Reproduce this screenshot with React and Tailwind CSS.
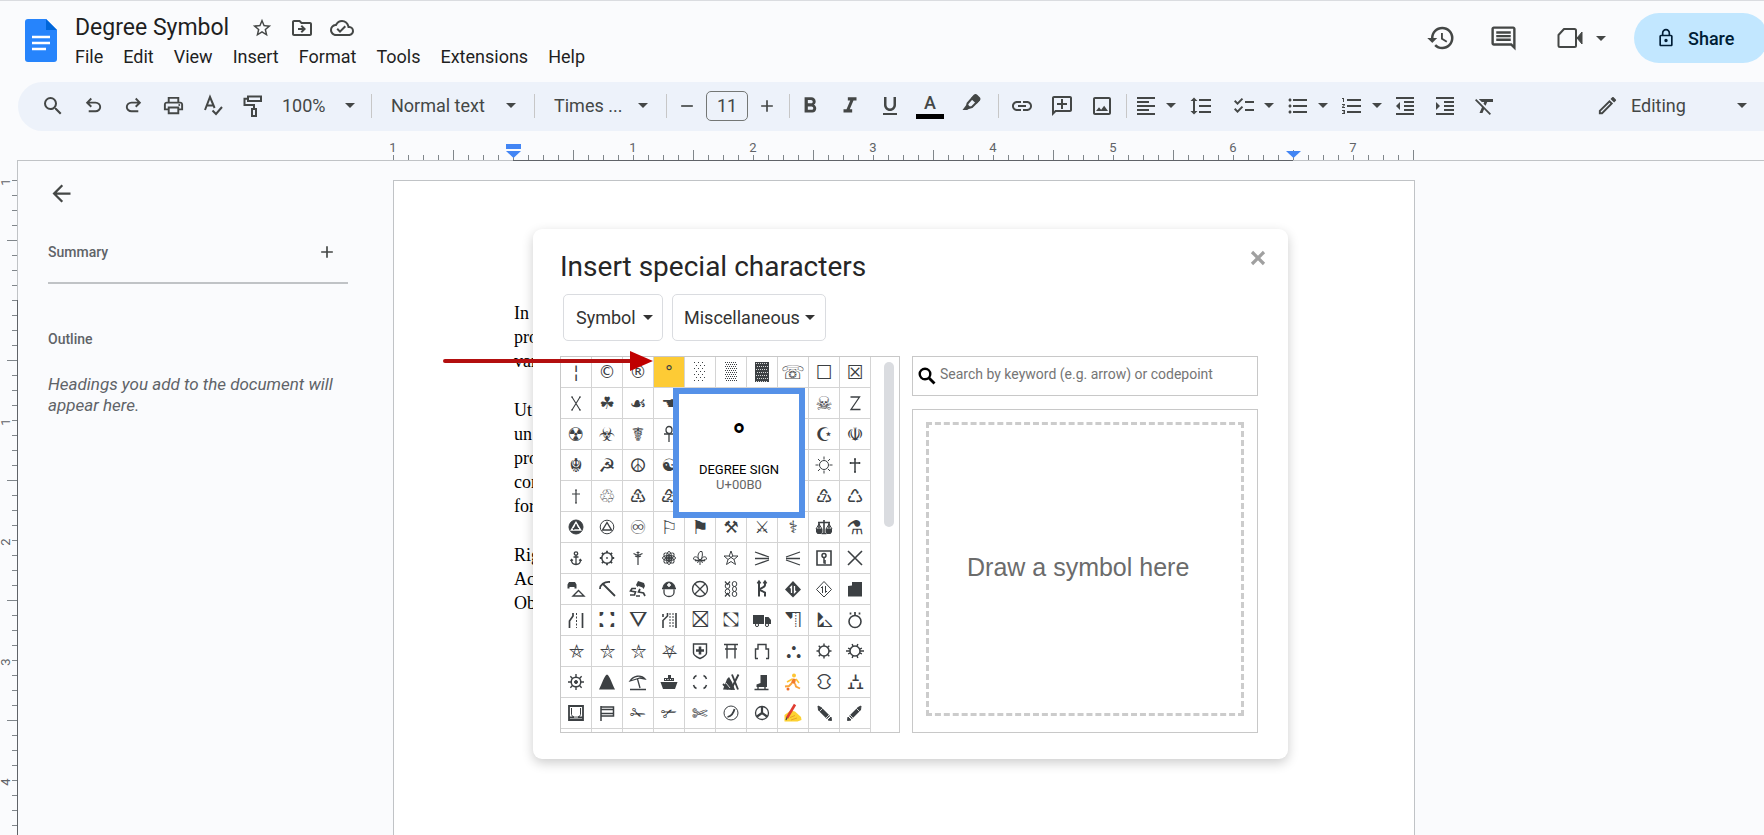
// src/App.jsx
import React, { useState } from 'react';
import {
  MdSearch,
  MdOutlinePrint,
  MdStarBorder,
  MdOutlineDriveFileMove,
  MdOutlineCloudDone,
  MdHistory,
  MdOutlineComment,
  MdOutlineLock,
  MdFormatAlignLeft,
  MdFormatLineSpacing,
  MdChecklist,
  MdFormatListBulleted,
  MdFormatListNumbered,
  MdFormatIndentDecrease,
  MdFormatIndentIncrease,
  MdFormatClear,
  MdInsertLink,
  MdOutlineAddComment,
  MdOutlineImage,
  MdOutlineEdit,
  MdFormatBold,
  MdFormatItalic,
  MdFormatUnderlined,
  MdRemove,
  MdAdd,
  MdArrowBack,
} from 'react-icons/md';

const MENUS = ['File', 'Edit', 'View', 'Insert', 'Format', 'Tools', 'Extensions', 'Help'];

const PARAGRAPHS = [
  ['In', 'pro', 'var'],
  ['Ut', 'un', 'pro', 'con', 'for'],
  ['Rig', 'Ac', 'Ob'],
];

const CHARACTERS = [
  '¦', '©', '®', '°', '░', '▒', '▓', '☏', '☐', '☒',
  '☓', '☘', '☙', '☚', '☛', '☜', '☞', '☟', '☠', '☡',
  '☢', '☣', '☤', '☥', '☦', '☧', '☨', '☩', '☪', '☫',
  '☬', '☭', '☮', '☯', '☸', '☹', '☺', '☻', '☼', '♰',
  '♱', '♲', '♳', '♴', '♵', '♶', '♷', '♸', '♹', '♺',
  '♼', '♽', '♾', '⚐', '⚑', '⚒', '⚔', '⚕', '⚖', '⚗',
  '⚓', '⚙', '⚚', '⚛', '⚜', '⚝', '⚞', '⚟', '⚿', '⛌',
  '⛍', '⛏', '⛐', '⛑', '⛒', '⛓', '⛕', '⛖', '⛗', '⛘',
  '⛙', '⛚', '⛛', '⛜', '⛝', '⛞', '⛟', '⛠', '⛡', '⛣',
  '⛤', '⛥', '⛦', '⛧', '⛨', '⛩', '⛫', '⛬', '⛭', '⛮',
  '⛯', '⛰', '⛱', '⛴', '⛶', '⛷', '⛸', '⛹', '⛻', '⛼',
  '⛾', '⛿', '✁', '✃', '✄', '✆', '✇', '✍', '✎', '✐',
];

// Glyphs that the text font draws too small
const LARGE = '☏☐☒☙☢☣☤☠☫☪☬☭☮♲♳♴♵♶♷♸♹♺♾⚑⚐⚗✁✃✄⛤⛥⛦⛧';
const EXTRA_LARGE = '⛚⛛⛝⛞⛠⛡⛬⛻⛼';

const rays = (cx, cy, from, to, count, start = 0) =>
  Array.from({ length: count }, (_, i) => {
    const a = start + (i * 2 * Math.PI) / count;
    return `M${cx + from * Math.cos(a)} ${cy + from * Math.sin(a)}L${cx + to * Math.cos(a)} ${cy + to * Math.sin(a)}`;
  }).join('');

const dotRows = (from, to, step, shift) =>
  Array.from(
    { length: Math.floor((to - from) / step) + 1 },
    (_, i) => `M${4 + (i % 2) * shift} ${from + i * step}H16`
  ).join('');

// Pictographs drawn by hand, on a 20x20 box
const DRAWN = {
  '░': <path d={dotRows(0.5, 20, 3, 2)} strokeWidth="1" strokeDasharray="1 3" />,
  '▒': <path d={dotRows(0.5, 20, 2, 1)} strokeWidth="1" strokeDasharray="1 1" />,
  '▓': (
    <>
      <path d="M3 0h14v20H3z" fill="currentColor" stroke="none" />
      <path d={dotRows(1.5, 20, 3, 1)} stroke="#fff" strokeWidth="0.800" strokeDasharray="1 1" />
    </>
  ),
  '☓': <path d="M6 4l8 13M14 4 6 17M5 4h2M13 4h2M5 17h2M13 17h2" strokeWidth="1.100" />,
  '☡': <path d="M5.500 4h9L6 16.500h9.500" strokeWidth="1.300" />,
  '☥': (
    <>
      <ellipse cx="10" cy="6" rx="3" ry="3.500" strokeWidth="1.300" />
      <path d="M5 10h10M10 10v8" strokeWidth="1.300" />
    </>
  ),
  '☼': (
    <>
      <circle cx="10" cy="10" r="4.500" />
      <path d={rays(10, 10, 5.5, 8.500, 8)} />
    </>
  ),
  '♰': <path d="M10 4v13M5.500 8h9M9 4h2M9 17h2M5.500 7v2M14.500 7v2" strokeWidth="1.500" />,
  '♱': <path d="M10 4v13M6 8h8M9 4h2M9 17h2" strokeWidth="1.200" />,
  '♼': (
    <>
      <circle cx="10" cy="10" r="7" fill="currentColor" />
      <path d="M10 5.500 5.500 13h9z" stroke="#fff" strokeWidth="1.600" />
      <path d="M9 8h2M7 11l1 2M12 12l1-1" stroke="currentColor" />
    </>
  ),
  '♽': (
    <>
      <circle cx="10" cy="10" r="6.800" />
      <path d="M10 5.500 5.500 13h9z" strokeWidth="1.400" />
    </>
  ),
  '⚖': (
    <>
      <path d="M10 3v13M4 5.500h12M5 5.500v6M15 5.500v6M7.500 16.500h5" strokeWidth="1.600" />
      <path d="M2 12l3-5 3 5zM12 12l3-5 3 5z" />
      <path d="M2 12h6.500v3l-1.500 2H3.500L2 15zM11.500 12H18v3l-1.500 2H13l-1.500-2z" fill="currentColor" stroke="none" />
    </>
  ),
  '⚓': (
    <>
      <circle cx="10" cy="5.500" r="1.700" strokeWidth="1.300" />
      <path d="M10 7v9.500M7.500 9h5M5.500 12c0 3 2 4.500 4.500 4.500s4.500-1.500 4.500-4.500M4.500 13l1-1.500L7 12.500M15.500 13l-1-1.500-1.500 1" strokeWidth="1.300" />
    </>
  ),
  '⚙': (
    <>
      <circle cx="10" cy="10" r="5.200" strokeWidth="1.500" />
      <circle cx="10" cy="10" r="0.900" fill="currentColor" stroke="none" />
      <path d={rays(10, 10, 5, 7.200, 8)} strokeWidth="1.800" />
    </>
  ),
  '⚚': <path d="M10 3.500V17M5.500 5.500l4.500 2 4.500-2M7 8l3 1 3-1M8.500 4.500h3" strokeWidth="1.200" />,
  '⚛': (
    <>
      <ellipse cx="10" cy="10" rx="6.500" ry="2.600" />
      <ellipse cx="10" cy="10" rx="6.500" ry="2.600" transform="rotate(45 10 10)" />
      <ellipse cx="10" cy="10" rx="6.500" ry="2.600" transform="rotate(90 10 10)" />
      <ellipse cx="10" cy="10" rx="6.500" ry="2.600" transform="rotate(135 10 10)" />
      <circle cx="10" cy="10" r="1.500" fill="currentColor" />
    </>
  ),
  '⚜': (
    <>
      <path d="M10 3.500c-3 3.500-2 6-1 8h2c1-2 2-4.500 1-8z M8.500 11.500c-.5-3-4-3.500-5-1.500 0 2 1.500 2.500 2.500 1.500M11.500 11.500c.5-3 4-3.500 5-1.500 0 2-1.500 2.500-2.500 1.500" />
      <path d="M5 12.500h10" strokeWidth="1.600" />
      <path d="M10 12v5M8.500 13l-1 2M11.500 13l1 2" />
    </>
  ),
  '⚝': <path d="M10 3l1.800 5H17l-4 3.500 1.500 5L10 13.500 5.500 16.500l1.500-5L3 8h5.200zM8 8l5 3.500M12 8l-5 3.500" />,
  '⚞': <path d="M3 4l14 5M3 10.500h14M3 17l14-5" strokeWidth="1.300" />,
  '⚟': <path d="M17 4 3 9M17 10.500H3M17 17 3 12" strokeWidth="1.300" />,
  '⚿': (
    <>
      <path d="M3 3h14v14H3z" strokeWidth="1.600" />
      <circle cx="10" cy="7.500" r="2" strokeWidth="1.500" />
      <path d="M10 9.500V15.500M10 13h2M10 15h2" strokeWidth="1.500" />
    </>
  ),
  '⛌': <path d="M3 3l14 14M17 3 3 17" strokeWidth="1.600" />,
  '⛍': (
    <>
      <path d="M3 3h6l1.500 2.500v4H8.500V8h-5v1.500h-2v-4z" fill="currentColor" stroke="none" />
      <path d="M12.500 11.500 18 17H7z" strokeWidth="1.400" />
    </>
  ),
  '⛏': <path d="M3 10C3 6 7 2.500 13 3M6 5l12 12" strokeWidth="1.800" />,
  '⛐': (
    <>
      <path d="M10 2l6 2 1 3-1.500 3-1-1.500-4-1.500-1 1L8 6z" fill="currentColor" stroke="none" />
      <path d="M8 9.500H4l-1.500 2.500 5 1-1 3H2M12 10l-1.500 3 5 1 1.500 3M8 17h4" strokeWidth="1.700" />
    </>
  ),
  '⛑': (
    <>
      <path d="M4 9a6 6 0 0 1 12 0z" fill="currentColor" />
      <path d="M3 9.500h14M5 10.500v3a5 4 0 0 0 10 0v-3" strokeWidth="1.300" />
      <path d="M10 4v4M8 6h4" stroke="#fff" strokeWidth="1.500" />
    </>
  ),
  '⛒': (
    <>
      <circle cx="10" cy="10" r="7.500" strokeWidth="1.300" />
      <path d="M4.700 4.700l10.600 10.600M15.300 4.700 4.700 15.300" strokeWidth="1.300" />
    </>
  ),
  '⛓': (
    <>
      <path d="M4 2.500l2.500 3L9 2.500M4 17.500l2.500-3 2.500 3" strokeWidth="1.300" />
      <ellipse cx="6.500" cy="7" rx="2.300" ry="2.500" />
      <ellipse cx="6.500" cy="12.500" rx="2.300" ry="2.500" />
      <ellipse cx="13.500" cy="5" rx="2.300" ry="2.500" />
      <ellipse cx="13.500" cy="10" rx="2" ry="2.500" />
      <ellipse cx="13.500" cy="15" rx="2.300" ry="2.500" />
    </>
  ),
  '⛕': <path d="M7 2.500v15M13 3v3c0 3-6 3-6 5M8 11l5 2.500v4M5.500 4.500 7 2.500l1.500 2M11.500 4.500l1.500-2 1.500 2" strokeWidth="2" />,
  '⛖': (
    <>
      <path d="M10 2l8 8.500-8 8-8-8z" fill="currentColor" stroke="none" />
      <path d="M8.500 14V7.500L7 9M11.500 7v6.500L13 12" stroke="#fff" strokeWidth="1.300" />
    </>
  ),
  '⛗': <path d="M10 2.500l7.500 8-7.500 7.500-7.500-7.500zM8.500 14V7.500L7 9M11.500 7v6.500L13 12" />,
  '⛘': <path d="M7 3h10v14.500H3V7l4-.500z" fill="currentColor" stroke="none" />,
  '⛙': (
    <>
      <path d="M7 3v3l-3.500 5v7M16.500 3v15" strokeWidth="1.700" />
      <path d="M10.500 3v15" strokeDasharray="2 1.500" />
    </>
  ),
  '⛜': (
    <>
      <path d="M8.500 3v3L4 10.500V18M4 4v3M17 3v15" strokeWidth="1.600" />
      <path d="M11 3v15M14 3v15" strokeDasharray="2 1" />
    </>
  ),
  '⛟': (
    <>
      <path d="M1 5h11v9H1zM13 7h3.500L19 10v4h-6z" fill="currentColor" stroke="none" />
      <circle cx="5" cy="15" r="1.600" fill="#fff" />
      <circle cx="15" cy="15" r="1.600" fill="#fff" />
    </>
  ),
  '⛣': (
    <>
      <circle cx="10" cy="11.500" r="6" strokeWidth="1.600" />
      <path d="M10 2v3.500M5.500 2.500v2M14.500 2.500v2" strokeWidth="1.700" />
    </>
  ),
  '⛨': (
    <>
      <path d="M3.500 3h13v9c0 2-3 4-6.500 5.500C6.500 16 3.500 14 3.500 12z" strokeWidth="1.400" />
      <path d="M10 5.500v8M6 9.500h8" strokeWidth="2.600" />
    </>
  ),
  '⛩': <path d="M3 3.500h14M4 8h12M6 4v13.500M14 4v13.500" strokeWidth="1.400" />,
  '⛫': <path d="M3.500 17.500V8H6V3.500h8V8h2.500v9.500M6 17.500H3M17 17.500h-3" strokeWidth="1.400" />,
  '⛭': (
    <>
      <circle cx="10" cy="10" r="5" strokeWidth="1.500" />
      <path d={rays(10, 10, 5, 7.500, 8)} strokeWidth="1.400" />
    </>
  ),
  '⛮': (
    <>
      <circle cx="10" cy="10" r="5" strokeWidth="1.500" />
      <path d={rays(10, 10, 5, 7.500, 8, Math.PI / 8)} strokeWidth="1.400" />
      <path d="M1 10h4M15 10h4" strokeWidth="1.400" />
    </>
  ),
  '⛯': (
    <>
      <circle cx="10" cy="10" r="4.800" strokeWidth="1.500" />
      <circle cx="10" cy="10" r="1.500" fill="currentColor" />
      <path d={rays(10, 10, 5, 8, 8)} strokeWidth="1.400" />
    </>
  ),
  '⛰': <path d="M2 17.500C5 12 7 4 10 2.500c3 1.500 5 9.500 8 15z" fill="currentColor" stroke="none" />,
  '⛱': <path d="M2 9C5 4 13 2 17 7l-5-1-5 1.500zM9.500 7l2.500 9M2 17.500h16" strokeWidth="1.300" />,
  '⛴': (
    <>
      <path d="M1.500 10h17l-2.500 7H4zM5 6h10v3H5zM9 3h3v3H9z" fill="currentColor" stroke="none" />
      <path d="M6 7.500h8" stroke="#fff" strokeDasharray="1 1.500" />
    </>
  ),
  '⛶': <path d="M3.500 7a5 5 0 0 1 3-3.500M13.500 3.500a5 5 0 0 1 3 3.500M16.500 13a5 5 0 0 1-3 3.500M6.500 16.500a5 5 0 0 1-3-3.500" strokeWidth="1.500" />,
  '⛷': (
    <>
      <path d="M2 17.500 6 7l2-2 3 5 3 8z" fill="currentColor" stroke="none" />
      <path d="M11 2.500l6 15M17.500 2.500 10 17.500M2 12l5 5" strokeWidth="1.900" />
      <path d="M5 11l4 5" stroke="#fff" strokeWidth="0.800" />
    </>
  ),
  '⛸': (
    <>
      <path d="M8.500 3H15v12H4.500v-2.500L8.500 11z" fill="currentColor" stroke="none" />
      <path d="M2.500 17.500h14M6 15v2M13 15v2" strokeWidth="1.400" />
    </>
  ),
  '⛹': (
    <>
      <circle cx="11" cy="3.500" r="2" fill="#fdc533" stroke="none" />
      <path d="M9.500 6.500 8 11l4 1 1-5z" fill="#f47b2a" stroke="none" />
      <path d="M9.500 7 4 10M13 7l3 4" stroke="#fdc533" strokeWidth="1.600" />
      <path d="M9 11l-3 3-4 .5M12 11.500l1 3 4 2" stroke="#f9a43a" strokeWidth="1.900" />
      <circle cx="5" cy="17" r="1.500" fill="#ef6c2a" stroke="none" />
    </>
  ),
  '⛾': (
    <>
      <path d="M3 3h14v14H3z" strokeWidth="1.800" />
      <path d="M5.500 5v6.500a3 3 0 0 0 3 2.500h3a3 3 0 0 0 3-2.500V5" />
      <path d="M3 14.500h14" strokeWidth="2" />
      <path d="M8 14h4" stroke="#fff" />
    </>
  ),
  '⛿': <path d="M4 3v15M4 4h12.500v9H4M4 6.500h12.500M4 10.500h12.500" strokeWidth="1.500" />,
  '✍': (
    <>
      <path d="M1.500 18.500V12l6-4.500 4.500 1 6 5.500.5 3-4 1.500z" fill="#fdd231" stroke="none" />
      <path d="M7 14.500l5-2M8 17l6-2" stroke="#e59e25" strokeWidth="0.900" />
      <path d="M12 1.500 4 15" stroke="#e03c31" strokeWidth="2.600" />
      <path d="M4 14.500 3 17" stroke="#444" strokeWidth="1.200" />
    </>
  ),
  '✎': (
    <>
      <path d="M5.500 5.500l9 9" strokeWidth="4.500" />
      <path d="M4 3l3 1.500L4.500 7zM14 17l3.500.5-.5-3.500z" fill="currentColor" />
      <path d="M5.500 8.500l3-3M12 15l3-3" stroke="#fff" strokeWidth="0.800" />
    </>
  ),
  '✐': (
    <>
      <path d="M14.500 5.500l-9 9" strokeWidth="4" />
      <path d="M16 3l-3 1.500L15.500 7zM6 17l-3.500.5.5-3.500z" fill="currentColor" />
      <path d="M14.500 8.500l-3-3M8 15l-3-3" stroke="#fff" strokeWidth="0.800" />
    </>
  ),
  '✆': (
    <>
      <circle cx="10" cy="10" r="7" />
      <path d="M6.500 14c4-1 6-3.500 7-8" strokeWidth="1.800" />
    </>
  ),
  '✇': (
    <>
      <circle cx="10" cy="10" r="6.500" strokeWidth="1.300" />
      <path d="M10 10V4M10 10l5 3.500M10 10l-5 3.500" strokeWidth="2.200" />
    </>
  ),
};

const glyphSize = (char) => {
  if (EXTRA_LARGE.includes(char)) return 'text-[22px]';
  if (LARGE.includes(char)) return 'text-[19px]';
  return 'text-[17px]';
};

const Caret = () => (
  <svg viewBox="0 0 10 5" className="h-[5px] w-[10px] shrink-0" fill="currentColor" aria-hidden="true">
    <path d="M0 0h10L5 5z" />
  </svg>
);

const UndoIcon = () => (
  <svg viewBox="0 -960 960 960" className="size-[23px]" fill="currentColor">
    <path d="M280-200v-80h284q63 0 109.5-40T720-420q0-60-46.5-100T564-560H312l104 104-56 56-200-200 200-200 56 56-104 104h252q97 0 166.5 63T800-420q0 94-69.5 157T564-200H280Z" />
  </svg>
);

const RedoIcon = () => (
  <svg viewBox="0 -960 960 960" className="size-[23px]" fill="currentColor">
    <path d="M396-200q-97 0-166.5-63T160-420q0-94 69.5-157T396-640h252L544-744l56-56 200 200-200 200-56-56 104-104H396q-63 0-109.5 40T240-420q0 60 46.5 100T396-280h284v80H396Z" />
  </svg>
);

const SpellIcon = () => (
  <svg viewBox="0 0 24 24" className="size-6" fill="none" stroke="currentColor" strokeWidth="2">
    <path d="M4 16 9 3l4.6 11M5.6 11.5h7" />
    <path d="m11.5 16.5 3.5 3.5 6-7" />
  </svg>
);

const PaintIcon = () => (
  <svg viewBox="0 0 24 24" className="size-6" fill="none" stroke="currentColor" strokeWidth="2">
    <path d="M7 2.5h13v4.500H7zM7 4.800H3.500V11H13v4" />
    <path d="M11 15h4v7h-4z" />
  </svg>
);

const HighlightIcon = () => (
  <svg viewBox="0 0 24 24" className="size-6" fill="none" stroke="currentColor" strokeWidth="2" strokeLinejoin="round">
    <path d="m9.500 9.500 7-8a1.500 1.500 0 0 1 2 0L21 4a1.500 1.500 0 0 1 0 2l-7 7-5 1.500z" />
    <path d="m14 4.500 4.500 4L21 5.500l-3.500-4z" fill="currentColor" />
    <path d="m9 10-4.500 6H9l3.500-3z" fill="currentColor" strokeWidth="0" />
  </svg>
);

const VideoIcon = () => (
  <svg viewBox="0 0 28 24" className="h-6 w-7" fill="none" stroke="currentColor" strokeWidth="2" strokeLinejoin="round">
    <path d="M8 3h10.500A1.500 1.500 0 0 1 20 4.500v15a1.500 1.500 0 0 1-1.500 1.500H4A1.500 1.500 0 0 1 2.500 19.500V9z" />
    <path d="m21 12 5-6v12z" fill="currentColor" strokeWidth="1" />
  </svg>
);

const BoldSearchIcon = () => (
  <svg viewBox="0 0 18 18" className="size-[18px] shrink-0" fill="none" stroke="#000" aria-hidden="true">
    <circle cx="7" cy="7" r="5.300" strokeWidth="2.400" />
    <path d="M11 11l5.500 5.500" strokeWidth="2.800" />
  </svg>
);

const DocsLogo = () => (
  <svg viewBox="0 0 32 43" className="h-[43px] w-8" aria-hidden="true">
    <path d="M3 0h18l11 11v29a3 3 0 0 1-3 3H3a3 3 0 0 1-3-3V3a3 3 0 0 1 3-3z" fill="#2684fc" />
    <path d="M21 0l11 11H21z" fill="#0066da" />
    <path d="M7 18h18M7 24h18M7 30h14" stroke="#fff" strokeWidth="2.400" />
  </svg>
);

const Divider = ({ className = '' }) => <div className={`h-6 w-px shrink-0 bg-[#c7c7c7] ${className}`} />;

const ToolButton = ({ label, children }) => (
  <button type="button" aria-label={label} className="flex h-10 w-10 shrink-0 items-center justify-center">
    {children}
  </button>
);

const MenuToolButton = ({ label, children }) => (
  <button type="button" aria-label={label} className="flex h-10 w-[54px] shrink-0 items-center justify-end gap-2 pr-px">
    {children}
    <Caret />
  </button>
);

const Header = () => (
  <header className="flex h-[82px] items-start border-t border-[#dadce0] pl-[25px]">
    <div className="mt-[18px]">
      <DocsLogo />
    </div>
    <div className="ml-[15px] pt-[7px]">
      <div className="flex items-center text-[#444746]">
        <h1 className="px-[3px] text-[23px] leading-9 text-[#1f1f1f]">Degree Symbol</h1>
        <div className="ml-[10px] flex">
          <ToolButton label="Star"><MdStarBorder size={22} /></ToolButton>
          <ToolButton label="Move"><MdOutlineDriveFileMove size={24} /></ToolButton>
          <ToolButton label="Saved to Drive"><MdOutlineCloudDone size={24} /></ToolButton>
        </div>
      </div>
      <nav className="-mt-[3px] flex gap-5 px-[3px] text-[18px] leading-6 text-[#1f1f1f]">
        {MENUS.map((menu) => (
          <button key={menu} type="button">{menu}</button>
        ))}
      </nav>
    </div>
    <div className="ml-auto flex items-center pt-3 text-[#444746]">
      <button type="button" aria-label="Version history" className="mr-[33px]"><MdHistory size={30} /></button>
      <button type="button" aria-label="Comments" className="mr-[38px]"><MdOutlineComment size={29} /></button>
      <button type="button" aria-label="Meet" className="mr-7 flex items-center gap-3">
        <VideoIcon />
        <Caret />
      </button>
      <button type="button" className="-mr-1 flex h-[50px] w-[134px] items-center gap-3 rounded-full bg-[#c2e7ff] pl-[22px] text-[18px] font-medium text-[#001d35]">
        <MdOutlineLock size={20} />
        Share
      </button>
    </div>
  </header>
);

const Toolbar = () => (
  <div className="ml-[18px] flex h-[49px] items-center rounded-l-full bg-[#edf2fa] pb-[2px] pl-[15px] text-[18px] text-[#444746]">
    <ToolButton label="Search"><MdSearch size={24} /></ToolButton>
    <ToolButton label="Undo"><UndoIcon /></ToolButton>
    <ToolButton label="Redo"><RedoIcon /></ToolButton>
    <ToolButton label="Print"><MdOutlinePrint size={23} /></ToolButton>
    <ToolButton label="Spelling"><SpellIcon /></ToolButton>
    <ToolButton label="Paint format"><PaintIcon /></ToolButton>
    <button type="button" className="flex h-10 w-[98px] shrink-0 items-center justify-between pr-4 pl-[9px]">
      100%
      <Caret />
    </button>
    <Divider />
    <button type="button" className="flex h-10 w-[162px] shrink-0 items-center justify-between pr-[18px] pl-[19px]">
      Normal text
      <Caret />
    </button>
    <Divider />
    <button type="button" className="flex h-10 w-[131px] shrink-0 items-center justify-between pr-[18px] pl-[19px]">
      Times ...
      <Caret />
    </button>
    <Divider />
    <div className="flex w-[122px] shrink-0 items-center justify-between pr-3 pl-[10px]">
      <button type="button" aria-label="Decrease font size"><MdRemove size={20} /></button>
      <input
        type="text"
        aria-label="Font size"
        defaultValue="11"
        className="h-[30px] w-[42px] rounded-[5px] border border-[#747775] text-center"
      />
      <button type="button" aria-label="Increase font size"><MdAdd size={20} /></button>
    </div>
    <Divider />
    <ToolButton label="Bold"><MdFormatBold size={26} /></ToolButton>
    <ToolButton label="Italic"><MdFormatItalic size={26} /></ToolButton>
    <ToolButton label="Underline"><MdFormatUnderlined size={24} /></ToolButton>
    <button type="button" aria-label="Text color" className="flex h-10 w-10 shrink-0 flex-col items-center justify-center">
      <span className="h-5 text-[18px] leading-5 font-medium">A</span>
      <span className="mt-px h-[5px] w-7 bg-black" />
    </button>
    <ToolButton label="Highlight color"><HighlightIcon /></ToolButton>
    <Divider className="mr-[3px] ml-2" />
    <ToolButton label="Insert link"><MdInsertLink size={24} /></ToolButton>
    <ToolButton label="Add comment"><MdOutlineAddComment size={24} className="-scale-x-100" /></ToolButton>
    <ToolButton label="Insert image"><MdOutlineImage size={24} /></ToolButton>
    <Divider className="ml-1" />
    <div className="-ml-1 flex">
      <MenuToolButton label="Align"><MdFormatAlignLeft size={24} /></MenuToolButton>
    </div>
    <div className="ml-1 flex">
      <ToolButton label="Line spacing"><MdFormatLineSpacing size={24} /></ToolButton>
    </div>
    <MenuToolButton label="Checklist"><MdChecklist size={24} /></MenuToolButton>
    <MenuToolButton label="Bulleted list"><MdFormatListBulleted size={24} /></MenuToolButton>
    <MenuToolButton label="Numbered list"><MdFormatListNumbered size={24} /></MenuToolButton>
    <div className="ml-[2px] flex">
      <ToolButton label="Decrease indent"><MdFormatIndentDecrease size={24} /></ToolButton>
      <ToolButton label="Increase indent"><MdFormatIndentIncrease size={24} /></ToolButton>
      <ToolButton label="Clear formatting"><MdFormatClear size={24} /></ToolButton>
    </div>
    <button type="button" className="ml-auto flex h-10 w-[168px] shrink-0 items-center pr-[17px]">
      <MdOutlineEdit size={23} className="mr-3" />
      Editing
      <span className="ml-auto"><Caret /></span>
    </button>
  </div>
);

// One tick each 15px, eight to the inch
const HorizontalRuler = () => (
  <svg className="h-[30px] w-full" aria-hidden="true">
    <path d="M17 29.500H514M1293 29.500H4000" stroke="#c0c3c6" />
    <path d="M513 29.500H1293" stroke="#5f6368" />
    {Array.from({ length: 69 }, (_, i) => {
      const x = 393.5 + i * 15;
      return (
        <path key={i} d={`M${x} ${i % 8 === 4 ? 19 : 24}V29`} stroke="#80868b" />
      );
    })}
    {[1, null, 1, 2, 3, 4, 5, 6, 7].map((n, i) =>
      n === null ? null : (
        <text key={i} x={393 + i * 120} y="21" textAnchor="middle" fontSize="13" fill="#5f6368">{n}</text>
      )
    )}
    <path d="M506 13h15v5h-15zM506 20h15l-7.500 7z" fill="#4285f4" />
    <path d="M1286 20h15l-7.500 7z" fill="#4285f4" />
  </svg>
);

const VerticalRuler = () => (
  <svg className="h-full w-[18px] shrink-0" aria-hidden="true">
    <path d="M17.500 0V139" stroke="#c0c3c6" />
    <path d="M17.500 139V2000" stroke="#5f6368" />
    {Array.from({ length: 80 }, (_, i) => {
      const y = 19.5 + i * 15;
      return <path key={i} d={`M${i % 8 === 4 ? 7 : 12} ${y}H17`} stroke="#80868b" />;
    })}
    {[1, null, 1, 2, 3, 4].map((n, i) =>
      n === null ? null : (
        <text key={i} transform={`translate(10 ${21 + i * 120}) rotate(-90)`} textAnchor="middle" fontSize="13" fill="#5f6368">{n}</text>
      )
    )}
  </svg>
);

const Sidebar = () => (
  <aside className="w-[375px] shrink-0 pr-[45px] pl-[30px] text-[#5f6368]">
    <button type="button" aria-label="Close outline" className="mt-[19px] block text-[#444746]">
      <MdArrowBack size={27} />
    </button>
    <div className="mt-[33px] flex h-6 items-center justify-between pr-[11px]">
      <h2 className="text-[14px] font-medium">Summary</h2>
      <button type="button" aria-label="Add summary" className="text-[#444746]"><MdAdd size={20} /></button>
    </div>
    <div className="mt-[18px] h-[2px] bg-[#c0c3c6]" />
    <h2 className="mt-[45px] text-[14px] leading-5 font-medium">Outline</h2>
    <p className="mt-[25px] text-[17px] leading-[21px] italic">Headings you add to the document will appear here.</p>
  </aside>
);

const SpecialCharactersDialog = () => {
  const [selected, setSelected] = useState(3);

  return (
    <div
      role="dialog"
      aria-labelledby="dialog-title"
      className="absolute top-[48px] left-[139px] h-[530px] w-[755px] rounded-[9px] bg-white px-[27px] pt-[19px] shadow-[0_4px_12px_rgba(0,0,0,0.2)]"
    >
      <div className="flex items-start justify-between">
        <h2 id="dialog-title" className="text-[28px] leading-[38px] text-[#262626]">Insert special characters</h2>
        <button type="button" aria-label="Close" className="mt-[2px] mr-[-5px] text-[#a0a0a0]">
          <svg viewBox="0 0 16 16" className="size-4" stroke="currentColor" strokeWidth="3.200">
            <path d="M2 2l12 12M14 2 2 14" />
          </svg>
        </button>
      </div>
      <div className="mt-2 flex gap-[9px] px-[3px] text-[18px] text-[#333]">
        <button type="button" className="flex h-[47px] w-[100px] items-center justify-between rounded-[5px] border border-[#dadce0] pr-[9px] pl-3">
          Symbol
          <Caret />
        </button>
        <button type="button" className="flex h-[47px] w-[154px] items-center justify-between rounded-[5px] border border-[#dadce0] pr-[10px] pl-[11px]">
          Miscellaneous
          <Caret />
        </button>
      </div>
      <div className="mt-[15px] flex gap-3">
        <div className="relative">
          <div className="flex h-[377px] w-[340px] overflow-hidden border border-[#c8c8c8]">
            <div className="grid h-max grid-cols-[repeat(10,31px)] auto-rows-[31px]">
              {CHARACTERS.map((char, index) => (
                <button
                  key={index}
                  type="button"
                  aria-label={char}
                  onClick={() => setSelected(index)}
                  className={`flex items-center justify-center overflow-hidden border-r border-b border-[#d4d4d4] font-['DejaVu_Sans',sans-serif] leading-none text-[#3c4043] ${glyphSize(char)} ${
                    selected === index ? 'bg-[#fdcb35]' : ''
                  }`}
                >
                  {DRAWN[char] ? (
                    <svg viewBox="0 0 20 20" className="size-5" fill="none" stroke="currentColor" strokeWidth="1">
                      {DRAWN[char]}
                    </svg>
                  ) : (
                    char
                  )}
                </button>
              ))}
              {Array.from({ length: 10 }, (_, i) => (
                <div key={i} className="border-r border-[#d4d4d4]" />
              ))}
            </div>
            <div className="mt-[5px] ml-[13px] h-[165px] w-[10px] rounded-full bg-[#dadce0]" />
          </div>
          <div className="absolute top-8 left-[113px] flex h-[130px] w-[132px] flex-col items-center border-[6px] border-[#5591e8] bg-white">
            <span className="mt-[23px] h-[45px] text-[36px] leading-[42px] font-bold text-black">°</span>
            <span className="text-[13px] leading-[15px] text-black">DEGREE SIGN</span>
            <span className="text-[13px] leading-[15px] text-[#666]">U+00B0</span>
          </div>
        </div>
        <div className="flex w-[346px] flex-col gap-[13px]">
          <label className="flex h-10 items-center gap-1 border border-[#c8c8c8] pb-1 pl-[5px]">
            <span className="mt-1"><BoldSearchIcon /></span>
            <input
              type="text"
              aria-label="Search special characters"
              placeholder="Search by keyword (e.g. arrow) or codepoint"
              className="w-full text-[14px] outline-none placeholder:text-[#757575]"
            />
          </label>
          <div className="flex flex-1 border border-[#c8c8c8] px-[13px] pt-3 pb-4">
            <div className="flex flex-1 items-center border-[3px] border-dashed border-[#ccc] pb-[2px] pl-[38px] font-['Liberation_Sans',sans-serif] text-[25px] text-[#6b6b6b]">
              Draw a symbol here
            </div>
          </div>
        </div>
      </div>
      {/* Arrow that points at the degree sign */}
      <svg viewBox="0 0 212 22" className="absolute top-[121px] left-[-90px] h-[22px] w-[212px]" aria-hidden="true">
        <path d="M2 11h188" stroke="#b30f0f" strokeWidth="4" strokeLinecap="round" />
        <path d="M187 1v20l23-10z" fill="#c00000" />
      </svg>
    </div>
  );
};

const DocumentPage = () => (
  <div className="relative mt-[19px] w-[1022px] shrink-0 border-x border-t border-[#c0c3c6] bg-white">
    <div className="flex flex-col gap-[25px] pt-[120px] pl-[120px] font-['Liberation_Serif',serif] text-[18px] leading-6 text-black">
      {PARAGRAPHS.map((lines, i) => (
        <div key={i}>
          {lines.map((line, j) => (
            <p key={j}>{line}</p>
          ))}
        </div>
      ))}
    </div>
    <SpecialCharactersDialog />
  </div>
);

const App = () => {
  return (
    <div className="flex h-screen w-full flex-col overflow-hidden bg-[#fafbfd] font-[Roboto,sans-serif]">
      <Header />
      <Toolbar />
      <HorizontalRuler />
      <main className="flex min-h-0 flex-1">
        <VerticalRuler />
        <Sidebar />
        <DocumentPage />
      </main>
    </div>
  );
};

export default App;
